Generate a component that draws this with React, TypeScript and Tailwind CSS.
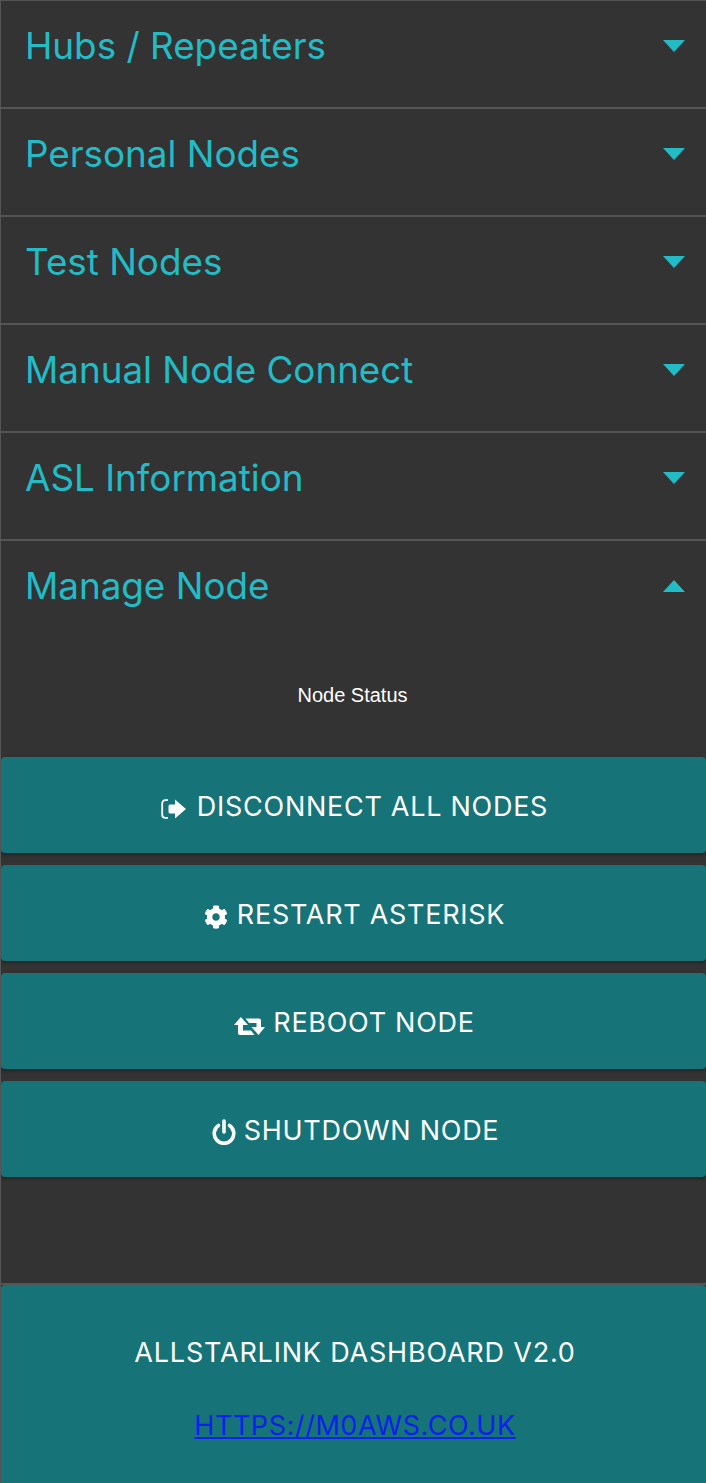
import React from "react";
import { FaCog } from "react-icons/fa";

function Caret({ up }: { up?: boolean }) {
  return (
    <svg width="22" height="12" viewBox="0 0 22 12" className="shrink-0">
      <path d={up ? "M0 12L11 0L22 12Z" : "M0 0H22L11 12Z"} fill="#22bcc7" />
    </svg>
  );
}

function Row({ title }: { title: string }) {
  return (
    <div className="h-[108px] border-b-2 border-[#555555] pl-[24px] pr-[21px] flex items-start justify-between">
      <span className="text-[36.8px] leading-[44px] mt-[23px] text-[#22bcc7]">{title}</span>
      <span className="mt-[39px]"><Caret /></span>
    </div>
  );
}

function SignOut() {
  return (
    <svg width="25" height="20" viewBox="0 0 25 20" className="shrink-0 mt-[7px]">
      <path d="M7 1.2H4.2A3 3 0 0 0 1.2 4.2V15.8A3 3 0 0 0 4.2 18.8H7" fill="none" stroke="#fff" strokeWidth="1.8" />
      <path d="M9 5.5H14V0.5L25 10L14 19.5V14.5H9A1.5 1.5 0 0 1 7.5 13V7A1.5 1.5 0 0 1 9 5.5Z" fill="#fff" />
    </svg>
  );
}

function Retweet() {
  return (
    <svg width="31" height="18" viewBox="0 0 31 18" className="shrink-0 mt-[10px]">
      <path d="M6.8 0L14 8H9V13.5H17L20.5 18H6A2 2 0 0 1 4 16V8H0Z" fill="#fff" />
      <path d="M11.5 1.5H25A2 2 0 0 1 27 3.5V10H31L24.5 18L17.5 10H22.5V6H15Z" fill="#fff" />
    </svg>
  );
}

function Power() {
  return (
    <svg width="24" height="26" viewBox="0 0 24 26" className="shrink-0 mt-[6px] ml-[2px]">
      <path d="M6.4 6.4A9.8 9.8 0 1 0 17.6 6.4" fill="none" stroke="#fff" strokeWidth="3.6" strokeLinecap="round" />
      <path d="M12 2V13" fill="none" stroke="#fff" strokeWidth="3.6" strokeLinecap="round" />
    </svg>
  );
}

function Btn({ icon, label, gap }: { icon: React.ReactNode; label: string; gap: string }) {
  return (
    <div className={`h-[96px] rounded-[4px] bg-[#167377] shadow-[0_2px_3px_rgba(0,0,0,0.3)] flex items-center justify-center pl-[2px] text-white text-[27px] tracking-[0.72px] ${gap}`}>
      {icon}
      <span className="pt-[4px]">{label}</span>
    </div>
  );
}

export default function App() {
  return (
    <div className="w-[706px] h-[1483px] bg-[#333333] border-l border-t border-[#555555] overflow-hidden font-['Inter',sans-serif] flex flex-col">
      <Row title="Hubs / Repeaters" />
      <Row title="Personal Nodes" />
      <Row title="Test Nodes" />
      <Row title="Manual Node Connect" />
      <Row title="ASL Information" />
      <div className="pl-[24px] pr-[21px] flex items-start justify-between h-[108px]">
        <span className="text-[36.8px] leading-[44px] mt-[23px] text-[#22bcc7]">Manage Node</span>
        <span className="mt-[39px]"><Caret up /></span>
      </div>
      <div className="text-center text-white text-[20px] leading-[28px] font-['Liberation_Sans',sans-serif] mt-[32px] pr-[2px]">Node Status</div>
      <div className="mt-[48px] flex flex-col gap-[12px]">
        <Btn gap="gap-[11px]" icon={<SignOut />} label="DISCONNECT ALL NODES" />
        <Btn gap="gap-[9px]" icon={<FaCog size={24} className="mt-[8px]" />} label="RESTART ASTERISK" />
        <Btn gap="gap-[8px]" icon={<Retweet />} label="REBOOT NODE" />
        <Btn gap="gap-[8px]" icon={<Power />} label="SHUTDOWN NODE" />
      </div>
      <div className="mt-[106px] border-t-2 border-[#555555] flex-1">
        <div className="h-full rounded-t-[4px] bg-[#167377] flex flex-col items-center pl-[3px] text-[27px]">
          <div className="mt-[48px] text-white tracking-[0.8px]">ALLSTARLINK DASHBOARD V2.0</div>
          <a href="#" className="mt-[32px] text-[#0a1ff0] underline tracking-[0.55px]">HTTPS://M0AWS.CO.UK</a>
        </div>
      </div>
    </div>
  );
}
